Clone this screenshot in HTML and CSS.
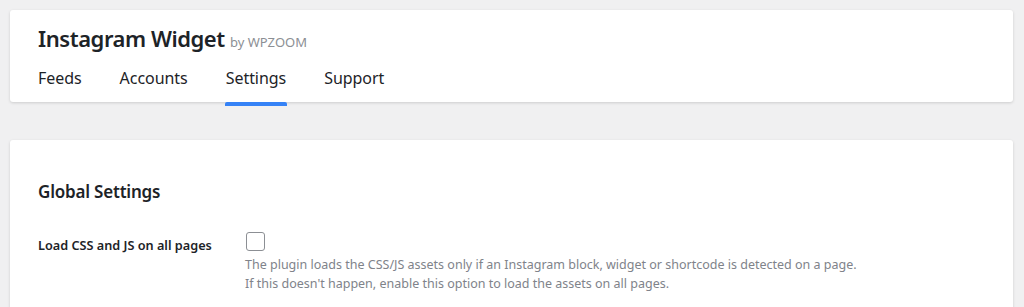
FILE: index.html
```html
<!DOCTYPE html>
<html lang="en">
<head>
  <meta charset="UTF-8" />
  <title>Instagram Widget Settings</title>
  <link rel="stylesheet" href="styles.css">
</head>
<body>
  <div class="wrap">
    <div class="header-card">
      <h1 class="title">Instagram Widget <span class="by">by WPZOOM</span></h1>
      <nav class="tabs">
        <a href="#" class="tab">Feeds</a>
        <a href="#" class="tab">Accounts</a>
        <a href="#" class="tab active">Settings</a>
        <a href="#" class="tab">Support</a>
      </nav>
    </div>

    <div class="settings-card">
      <h2>Global Settings</h2>
      <div class="field-row">
        <label for="load-assets" class="field-label">Load CSS and JS on all pages</label>
        <div class="field-control">
          <input type="checkbox" id="load-assets" class="checkbox" />
          <p class="description">The plugin loads the CSS/JS assets only if an Instagram block, widget or shortcode is detected on a page.<br>If this doesn't happen, enable this option to load the assets on all pages.</p>
        </div>
      </div>
    </div>
  </div>
</body>
</html>
```

FILE: styles.css
```css
body {
  margin: 0;
  font-family: 'Noto Sans', 'Open Sans', sans-serif;
  background-color: #f0f0f1;
  color: #1d2327;
}

.wrap {
  padding: 10px 11px 0 10px;
}

.header-card {
  background: #ffffff;
  border-radius: 3px;
  box-shadow: 0 1px 3px rgba(0,0,0,0.15);
  padding: 0 28px;
  height: 92px;
  box-sizing: border-box;
}

.title {
  margin: 0;
  padding-top: 13px;
  font-size: 22px;
  font-weight: 600;
  line-height: 30px;
  letter-spacing: -0.45px;
}

.title .by {
  font-size: 13px;
  font-weight: 400;
  color: #8c8f94;
  letter-spacing: 0;
  margin-left: 0;
}

.tabs {
  display: flex;
  gap: 38px;
  margin-top: 10px;
}

.tab {
  position: relative;
  color: #1d2327;
  text-decoration: none;
  font-size: 16px;
  line-height: 22px;
  letter-spacing: -0.05px;
  padding-bottom: 17px;
}

.tab.active::after {
  content: "";
  position: absolute;
  left: -1px;
  right: -1px;
  bottom: 0;
  height: 4px;
  background: #3582f6;
  border-radius: 2px 2px 0 0;
}

.settings-card {
  margin-top: 38px;
  background: #ffffff;
  border-radius: 3px;
  box-shadow: 0 1px 3px rgba(0,0,0,0.15);
  padding: 40px 28px 30px;
}

.settings-card h2 {
  margin: 0 0 29px;
  font-size: 17px;
  font-weight: 600;
  line-height: 24px;
  letter-spacing: -0.2px;
}

.field-row {
  display: flex;
}

.field-label {
  width: 207px;
  font-size: 12.7px;
  font-weight: 600;
  line-height: 20px;
  padding-top: 2px;
}

.field-control {
  display: flex;
  flex-direction: column;
}

.checkbox {
  appearance: none;
  margin: -1px 0 0 1px;
  width: 19px;
  height: 19px;
  border: 1px solid #8c8f94;
  border-radius: 3px;
  background: #fff;
}

.description {
  margin: 4px 0 0;
  font-size: 12.5px;
  line-height: 19px;
  color: #80838a;
}
```
